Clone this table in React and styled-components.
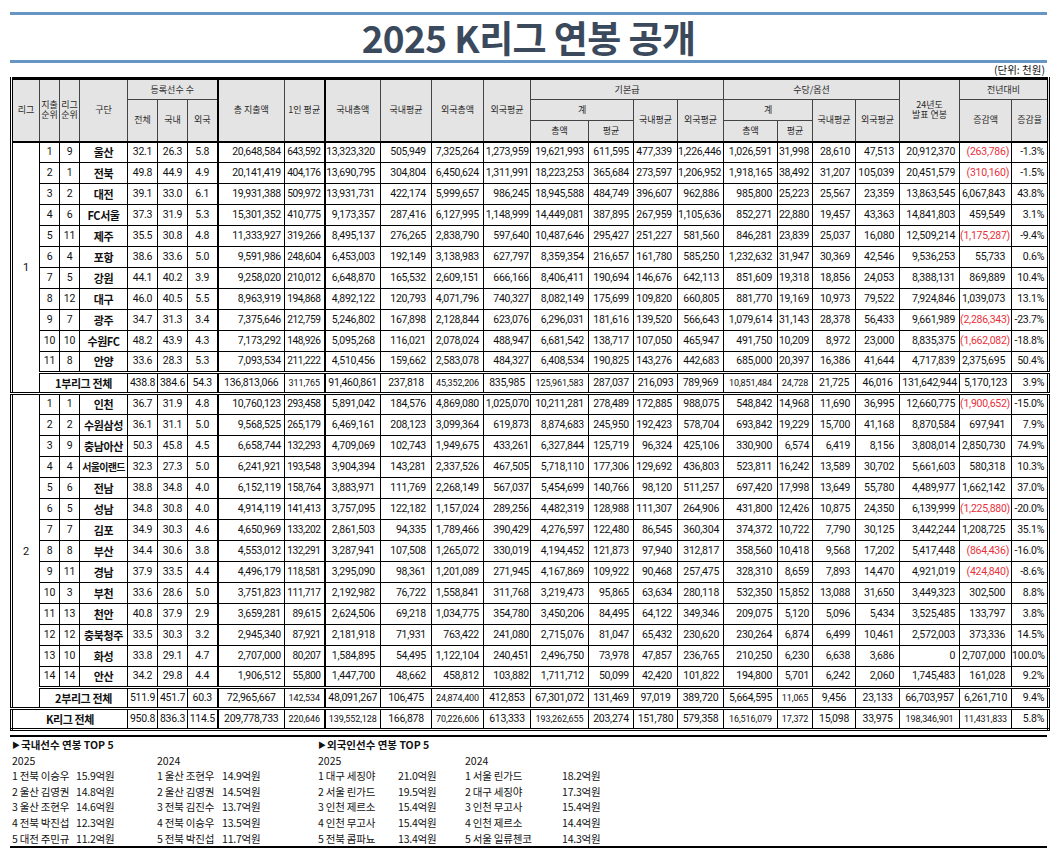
import React from "react";
import styled, { createGlobalStyle } from "styled-components";

const GlobalStyle = createGlobalStyle`
  body {
    margin: 0;
    background: #fff;
    color: #111;
    font-family: "Noto Sans CJK KR", "Noto Sans", sans-serif;
  }
`;

const NUM_FONT = `Roboto, "Noto Sans CJK KR", sans-serif`;
const KR_FONT = `"Noto Sans CJK KR", "Noto Sans", sans-serif`;

const COLS = [28, 20, 20, 48, 30, 30, 30, 67, 40, 56, 51, 52, 47, 58, 45, 44, 46, 54, 35, 43, 44, 60, 52, 37];
const THICK = [6, 8];
const SHRINK = [8];
const PAD = { 7: 3, 8: 3, 9: 5, 10: 5, 11: 4, 12: 1, 13: 4, 14: 4, 15: 5, 16: 4, 17: 5, 18: 3, 19: 5, 20: 5, 21: 4, 22: 6, 23: 3 };

const league1 = [
  [1, 9, "울산", "32.1", "26.3", "5.8", "20,648,584", "643,592", "13,323,320", "505,949", "7,325,264", "1,273,959", "19,621,993", "611,595", "477,339", "1,226,446", "1,026,591", "31,998", "28,610", "47,513", "20,912,370", "(263,786)", "-1.3%"],
  [2, 1, "전북", "49.8", "44.9", "4.9", "20,141,419", "404,176", "13,690,795", "304,804", "6,450,624", "1,311,991", "18,223,253", "365,684", "273,597", "1,206,952", "1,918,165", "38,492", "31,207", "105,039", "20,451,579", "(310,160)", "-1.5%"],
  [3, 2, "대전", "39.1", "33.0", "6.1", "19,931,388", "509,972", "13,931,731", "422,174", "5,999,657", "986,245", "18,945,588", "484,749", "396,607", "962,886", "985,800", "25,223", "25,567", "23,359", "13,863,545", "6,067,843", "43.8%"],
  [4, 6, "FC서울", "37.3", "31.9", "5.3", "15,301,352", "410,775", "9,173,357", "287,416", "6,127,995", "1,148,999", "14,449,081", "387,895", "267,959", "1,105,636", "852,271", "22,880", "19,457", "43,363", "14,841,803", "459,549", "3.1%"],
  [5, 11, "제주", "35.5", "30.8", "4.8", "11,333,927", "319,266", "8,495,137", "276,265", "2,838,790", "597,640", "10,487,646", "295,427", "251,227", "581,560", "846,281", "23,839", "25,037", "16,080", "12,509,214", "(1,175,287)", "-9.4%"],
  [6, 4, "포항", "38.6", "33.6", "5.0", "9,591,986", "248,604", "6,453,003", "192,149", "3,138,983", "627,797", "8,359,354", "216,657", "161,780", "585,250", "1,232,632", "31,947", "30,369", "42,546", "9,536,253", "55,733", "0.6%"],
  [7, 5, "강원", "44.1", "40.2", "3.9", "9,258,020", "210,012", "6,648,870", "165,532", "2,609,151", "666,166", "8,406,411", "190,694", "146,676", "642,113", "851,609", "19,318", "18,856", "24,053", "8,388,131", "869,889", "10.4%"],
  [8, 12, "대구", "46.0", "40.5", "5.5", "8,963,919", "194,868", "4,892,122", "120,793", "4,071,796", "740,327", "8,082,149", "175,699", "109,820", "660,805", "881,770", "19,169", "10,973", "79,522", "7,924,846", "1,039,073", "13.1%"],
  [9, 7, "광주", "34.7", "31.3", "3.4", "7,375,646", "212,759", "5,246,802", "167,898", "2,128,844", "623,076", "6,296,031", "181,616", "139,520", "566,643", "1,079,614", "31,143", "28,378", "56,433", "9,661,989", "(2,286,343)", "-23.7%"],
  [10, 10, "수원FC", "48.2", "43.9", "4.3", "7,173,292", "148,926", "5,095,268", "116,021", "2,078,024", "488,947", "6,681,542", "138,717", "107,050", "465,947", "491,750", "10,209", "8,972", "23,000", "8,835,375", "(1,662,082)", "-18.8%"],
  [11, 8, "안양", "33.6", "28.3", "5.3", "7,093,534", "211,222", "4,510,456", "159,662", "2,583,078", "484,327", "6,408,534", "190,825", "143,276", "442,683", "685,000", "20,397", "16,386", "41,644", "4,717,839", "2,375,695", "50.4%"],
];

const league2 = [
  [1, 1, "인천", "36.7", "31.9", "4.8", "10,760,123", "293,458", "5,891,042", "184,576", "4,869,080", "1,025,070", "10,211,281", "278,489", "172,885", "988,075", "548,842", "14,968", "11,690", "36,995", "12,660,775", "(1,900,652)", "-15.0%"],
  [2, 2, "수원삼성", "36.1", "31.1", "5.0", "9,568,525", "265,179", "6,469,161", "208,123", "3,099,364", "619,873", "8,874,683", "245,950", "192,423", "578,704", "693,842", "19,229", "15,700", "41,168", "8,870,584", "697,941", "7.9%"],
  [3, 9, "충남아산", "50.3", "45.8", "4.5", "6,658,744", "132,293", "4,709,069", "102,743", "1,949,675", "433,261", "6,327,844", "125,719", "96,324", "425,106", "330,900", "6,574", "6,419", "8,156", "3,808,014", "2,850,730", "74.9%"],
  [4, 4, "서울이랜드", "32.3", "27.3", "5.0", "6,241,921", "193,548", "3,904,394", "143,281", "2,337,526", "467,505", "5,718,110", "177,306", "129,692", "436,803", "523,811", "16,242", "13,589", "30,702", "5,661,603", "580,318", "10.3%"],
  [5, 6, "전남", "38.8", "34.8", "4.0", "6,152,119", "158,764", "3,883,971", "111,769", "2,268,149", "567,037", "5,454,699", "140,766", "98,120", "511,257", "697,420", "17,998", "13,649", "55,780", "4,489,977", "1,662,142", "37.0%"],
  [6, 5, "성남", "34.8", "30.8", "4.0", "4,914,119", "141,413", "3,757,095", "122,182", "1,157,024", "289,256", "4,482,319", "128,988", "111,307", "264,906", "431,800", "12,426", "10,875", "24,350", "6,139,999", "(1,225,880)", "-20.0%"],
  [7, 7, "김포", "34.9", "30.3", "4.6", "4,650,969", "133,202", "2,861,503", "94,335", "1,789,466", "390,429", "4,276,597", "122,480", "86,545", "360,304", "374,372", "10,722", "7,790", "30,125", "3,442,244", "1,208,725", "35.1%"],
  [8, 8, "부산", "34.4", "30.6", "3.8", "4,553,012", "132,291", "3,287,941", "107,508", "1,265,072", "330,019", "4,194,452", "121,873", "97,940", "312,817", "358,560", "10,418", "9,568", "17,202", "5,417,448", "(864,436)", "-16.0%"],
  [9, 11, "경남", "37.9", "33.5", "4.4", "4,496,179", "118,581", "3,295,090", "98,361", "1,201,089", "271,945", "4,167,869", "109,922", "90,468", "257,475", "328,310", "8,659", "7,893", "14,470", "4,921,019", "(424,840)", "-8.6%"],
  [10, 3, "부천", "33.6", "28.6", "5.0", "3,751,823", "111,717", "2,192,982", "76,722", "1,558,841", "311,768", "3,219,473", "95,865", "63,634", "280,118", "532,350", "15,852", "13,088", "31,650", "3,449,323", "302,500", "8.8%"],
  [11, 13, "천안", "40.8", "37.9", "2.9", "3,659,281", "89,615", "2,624,506", "69,218", "1,034,775", "354,780", "3,450,206", "84,495", "64,122", "349,346", "209,075", "5,120", "5,096", "5,434", "3,525,485", "133,797", "3.8%"],
  [12, 12, "충북청주", "33.5", "30.3", "3.2", "2,945,340", "87,921", "2,181,918", "71,931", "763,422", "241,080", "2,715,076", "81,047", "65,432", "230,620", "230,264", "6,874", "6,499", "10,461", "2,572,003", "373,336", "14.5%"],
  [13, 10, "화성", "33.8", "29.1", "4.7", "2,707,000", "80,207", "1,584,895", "54,495", "1,122,104", "240,451", "2,496,750", "73,978", "47,857", "236,765", "210,250", "6,230", "6,638", "3,686", "0", "2,707,000", "100.0%"],
  [14, 14, "안산", "34.2", "29.8", "4.4", "1,906,512", "55,800", "1,447,700", "48,662", "458,812", "103,882", "1,711,712", "50,099", "42,420", "101,822", "194,800", "5,701", "6,242", "2,060", "1,745,483", "161,028", "9.2%"],
];

// "~" marks a value printed in the smaller font
const sub1 = ["438.8", "384.6", "54.3", "136,813,066", "~311,765", "91,460,861", "237,818", "~45,352,206", "835,985", "~125,961,583", "287,037", "216,093", "789,969", "~10,851,484", "~24,728", "21,725", "46,016", "131,642,944", "5,170,123", "3.9%"];
const sub2 = ["511.9", "451.7", "60.3", "72,965,667", "~142,534", "48,091,267", "106,475", "~24,874,400", "412,853", "67,301,072", "131,469", "97,019", "389,720", "5,664,595", "~11,065", "9,456", "23,133", "66,703,957", "6,261,710", "9.4%"];
const total = ["950.8", "836.3", "114.5", "209,778,733", "~220,646", "~139,552,128", "166,878", "~70,226,606", "613,333", "~193,262,655", "203,274", "151,780", "579,358", "~16,516,079", "~17,372", "15,098", "33,975", "~198,346,901", "~11,431,833", "5.8%"];

const domestic25 = [["1 전북 이승우", "15.9억원"], ["2 울산 김영권", "14.8억원"], ["3 울산 조현우", "14.6억원"], ["4 전북 박진섭", "12.3억원"], ["5 대전 주민규", "11.2억원"]];
const domestic24 = [["1 울산 조현우", "14.9억원"], ["2 울산 김영권", "14.5억원"], ["3 전북 김진수", "13.7억원"], ["4 전북 이승우", "13.5억원"], ["5 전북 박진섭", "11.7억원"]];
const foreign25 = [["1 대구 세징야", "21.0억원"], ["2 서울 린가드", "19.5억원"], ["3 인천 제르소", "15.4억원"], ["4 인천 무고사", "15.4억원"], ["5 전북 콤파뇨", "13.4억원"]];
const foreign24 = [["1 서울 린가드", "18.2억원"], ["2 대구 세징야", "17.3억원"], ["3 인천 무고사", "15.4억원"], ["4 인천 제르소", "14.4억원"], ["5 서울 일류첸코", "14.3억원"]];

const Page = styled.div`
  width: 1037px;
  padding: 12px 0 0 10px;
`;

const TitleBar = styled.h1`
  margin: 0;
  height: 45px;
  line-height: 45px;
  border-top: 3px solid #6896c4;
  border-bottom: 3px solid #6896c4;
  text-align: center;
  font-family: ${KR_FONT};
  font-size: 37px;
  font-weight: 700;
  letter-spacing: -0.6px;
  color: #3b495c;
`;

const Unit = styled.div`
  height: 14px;
  line-height: 14px;
  padding-right: 2px;
  text-align: right;
  font-family: ${KR_FONT};
  font-size: 10.5px;
  color: #111;
`;

const SalaryTable = styled.table`
  width: 1037px;
  table-layout: fixed;
  border-collapse: collapse;
  border: 3px double #000;
  border-top: 3px solid #000;
`;

const HeadRow = styled.tr`
  height: 21px;
`;

const HeadCell = styled.th`
  background: #e4e4e4;
  border: 1px solid #444;
  border-right: ${(p) => (p.$thick ? "2px solid #000" : "1px solid #444")};
  border-bottom: ${(p) => (p.$last ? "2px solid #000" : "1px solid #444")};
  padding: 0;
  font-family: ${KR_FONT};
  font-size: 9px;
  font-weight: 400;
  line-height: 10px;
  color: #2a2a2a;
  white-space: pre-line;
  text-align: center;
  vertical-align: middle;
`;

const DataRow = styled.tr`
  height: 21px;
  & > td {
    border-top: ${(p) => (p.$sep ? "3px double #000" : "1px solid #000")};
  }
`;

const Cell = styled.td`
  border: 1px solid #000;
  border-right: ${(p) => (p.$thick ? "2px solid #000" : "1px solid #000")};
  padding: 0 ${(p) => (p.$align === "right" ? p.$pad : 0)}px 0 0;
  text-align: ${(p) => p.$align};
  vertical-align: middle;
  white-space: nowrap;
  font-family: ${NUM_FONT};
  font-size: ${(p) => (p.$small ? "9px" : p.$shrink ? "10.2px" : "10.5px")};
  letter-spacing: ${(p) => (p.$small ? "-0.1px" : p.$shrink ? "-0.45px" : "-0.25px")};
  line-height: 1;
  color: ${(p) => (p.$neg ? "#e8303a" : "#111")};
`;

const TeamCell = styled.td`
  border: 1px solid #000;
  padding: 0;
  text-align: center;
  vertical-align: middle;
  white-space: nowrap;
  font-family: ${KR_FONT};
  font-size: ${(p) => (p.$long ? "10px" : "11px")};
  font-weight: 700;
  letter-spacing: ${(p) => (p.$long ? "-0.7px" : "-0.4px")};
  line-height: 1;
  color: #111;
`;

const LeagueCell = styled(TeamCell)`
  font-family: ${NUM_FONT};
  font-size: 11px;
  font-weight: 400;
`;

const TopBox = styled.section`
  margin-top: 4px;
  border-top: 2px solid #000;
  border-bottom: 2px solid #000;
  display: grid;
  grid-template-columns: 64px 81px 65px 96px 80px 67px 97px 1fr;
  padding-left: 2px;
  font-family: ${KR_FONT};
  font-size: 10.5px;
  line-height: 15.6px;
  color: #111;
`;

const TopHeading = styled.div`
  grid-column: span 4;
  font-weight: 700;
`;

const Arrow = styled.span`
  font-size: 8px;
  margin-right: 1px;
  vertical-align: 1px;
`;

const YearLabel = styled.div`
  grid-column: span 2;
`;

const TopItem = styled.div`
  white-space: nowrap;
  letter-spacing: -0.2px;
`;

function valueCell(v, col, total) {
  const small = v.startsWith("~");
  const text = small ? v.slice(1) : v;
  const neg = text.startsWith("(");
  let align = col >= 7 ? "right" : "center";
  if (total && col < 23) align = "center";
  let pad = PAD[col] || 0;
  if (neg) pad = 2;
  return (
    <Cell
      key={col}
      $align={align}
      $pad={pad}
      $small={small}
      $shrink={!total && SHRINK.includes(col)}
      $neg={neg}
      $thick={THICK.includes(col)}
    >
      {text}
    </Cell>
  );
}

function TeamRow({ row, league, span, sep }) {
  const [spendRank, leagueRank, team, ...vals] = row;
  return (
    <DataRow $sep={sep}>
      {league && <LeagueCell rowSpan={span}>{league}</LeagueCell>}
      <Cell $align="center">{spendRank}</Cell>
      <Cell $align="center">{leagueRank}</Cell>
      <TeamCell $long={team.length >= 5}>{team}</TeamCell>
      {vals.map((v, i) => valueCell(v, i + 4, false))}
    </DataRow>
  );
}

function TotalRow({ label, span, vals }) {
  return (
    <DataRow $sep>
      <TeamCell colSpan={span}>{label}</TeamCell>
      {vals.map((v, i) => valueCell(v, i + 4, true))}
    </DataRow>
  );
}

export default function App() {
  const rows = [0, 1, 2, 3, 4];
  return (
    <Page>
      <GlobalStyle />
      <TitleBar>2025 K리그 연봉 공개</TitleBar>
      <Unit>(단위: 천원)</Unit>
      <SalaryTable>
        <colgroup>
          {COLS.map((w, i) => (
            <col key={i} style={{ width: w }} />
          ))}
        </colgroup>
        <thead>
          <HeadRow>
            <HeadCell rowSpan={3} $last>리그</HeadCell>
            <HeadCell rowSpan={3} $last>{"지출\n순위"}</HeadCell>
            <HeadCell rowSpan={3} $last>{"리그\n순위"}</HeadCell>
            <HeadCell rowSpan={3} $last>구단</HeadCell>
            <HeadCell colSpan={3} $thick>등록선수 수</HeadCell>
            <HeadCell rowSpan={3} $last>총 지출액</HeadCell>
            <HeadCell rowSpan={3} $last $thick>1인 평균</HeadCell>
            <HeadCell rowSpan={3} $last>국내총액</HeadCell>
            <HeadCell rowSpan={3} $last>국내평균</HeadCell>
            <HeadCell rowSpan={3} $last>외국총액</HeadCell>
            <HeadCell rowSpan={3} $last>외국평균</HeadCell>
            <HeadCell colSpan={4}>기본급</HeadCell>
            <HeadCell colSpan={4}>수당/옵션</HeadCell>
            <HeadCell rowSpan={3} $last>{"24년도\n발표 연봉"}</HeadCell>
            <HeadCell colSpan={2}>전년대비</HeadCell>
          </HeadRow>
          <HeadRow>
            <HeadCell rowSpan={2} $last>전체</HeadCell>
            <HeadCell rowSpan={2} $last>국내</HeadCell>
            <HeadCell rowSpan={2} $last $thick>외국</HeadCell>
            <HeadCell colSpan={2}>계</HeadCell>
            <HeadCell rowSpan={2} $last>국내평균</HeadCell>
            <HeadCell rowSpan={2} $last>외국평균</HeadCell>
            <HeadCell colSpan={2}>계</HeadCell>
            <HeadCell rowSpan={2} $last>국내평균</HeadCell>
            <HeadCell rowSpan={2} $last>외국평균</HeadCell>
            <HeadCell rowSpan={2} $last>증감액</HeadCell>
            <HeadCell rowSpan={2} $last>증감율</HeadCell>
          </HeadRow>
          <HeadRow>
            <HeadCell $last>총액</HeadCell>
            <HeadCell $last>평균</HeadCell>
            <HeadCell $last>총액</HeadCell>
            <HeadCell $last>평균</HeadCell>
          </HeadRow>
        </thead>
        <tbody>
          {league1.map((row, i) => (
            <TeamRow key={`a${i}`} row={row} league={i === 0 ? "1" : null} span={league1.length + 1} />
          ))}
          <TotalRow label="1부리그 전체" span={3} vals={sub1} />
          {league2.map((row, i) => (
            <TeamRow key={`b${i}`} row={row} league={i === 0 ? "2" : null} span={league2.length + 1} sep={i === 0} />
          ))}
          <TotalRow label="2부리그 전체" span={3} vals={sub2} />
          <TotalRow label="K리그 전체" span={4} vals={total} />
        </tbody>
      </SalaryTable>
      <TopBox>
        <TopHeading>
          <Arrow>▶</Arrow>국내선수 연봉 TOP 5
        </TopHeading>
        <TopHeading>
          <Arrow>▶</Arrow>외국인선수 연봉 TOP 5
        </TopHeading>
        <YearLabel>2025</YearLabel>
        <YearLabel>2024</YearLabel>
        <YearLabel>2025</YearLabel>
        <YearLabel>2024</YearLabel>
        {rows.map((i) =>
          [domestic25, domestic24, foreign25, foreign24].map((list, j) => (
            <React.Fragment key={`${i}-${j}`}>
              <TopItem>{list[i][0]}</TopItem>
              <TopItem>{list[i][1]}</TopItem>
            </React.Fragment>
          ))
        )}
      </TopBox>
    </Page>
  );
}
